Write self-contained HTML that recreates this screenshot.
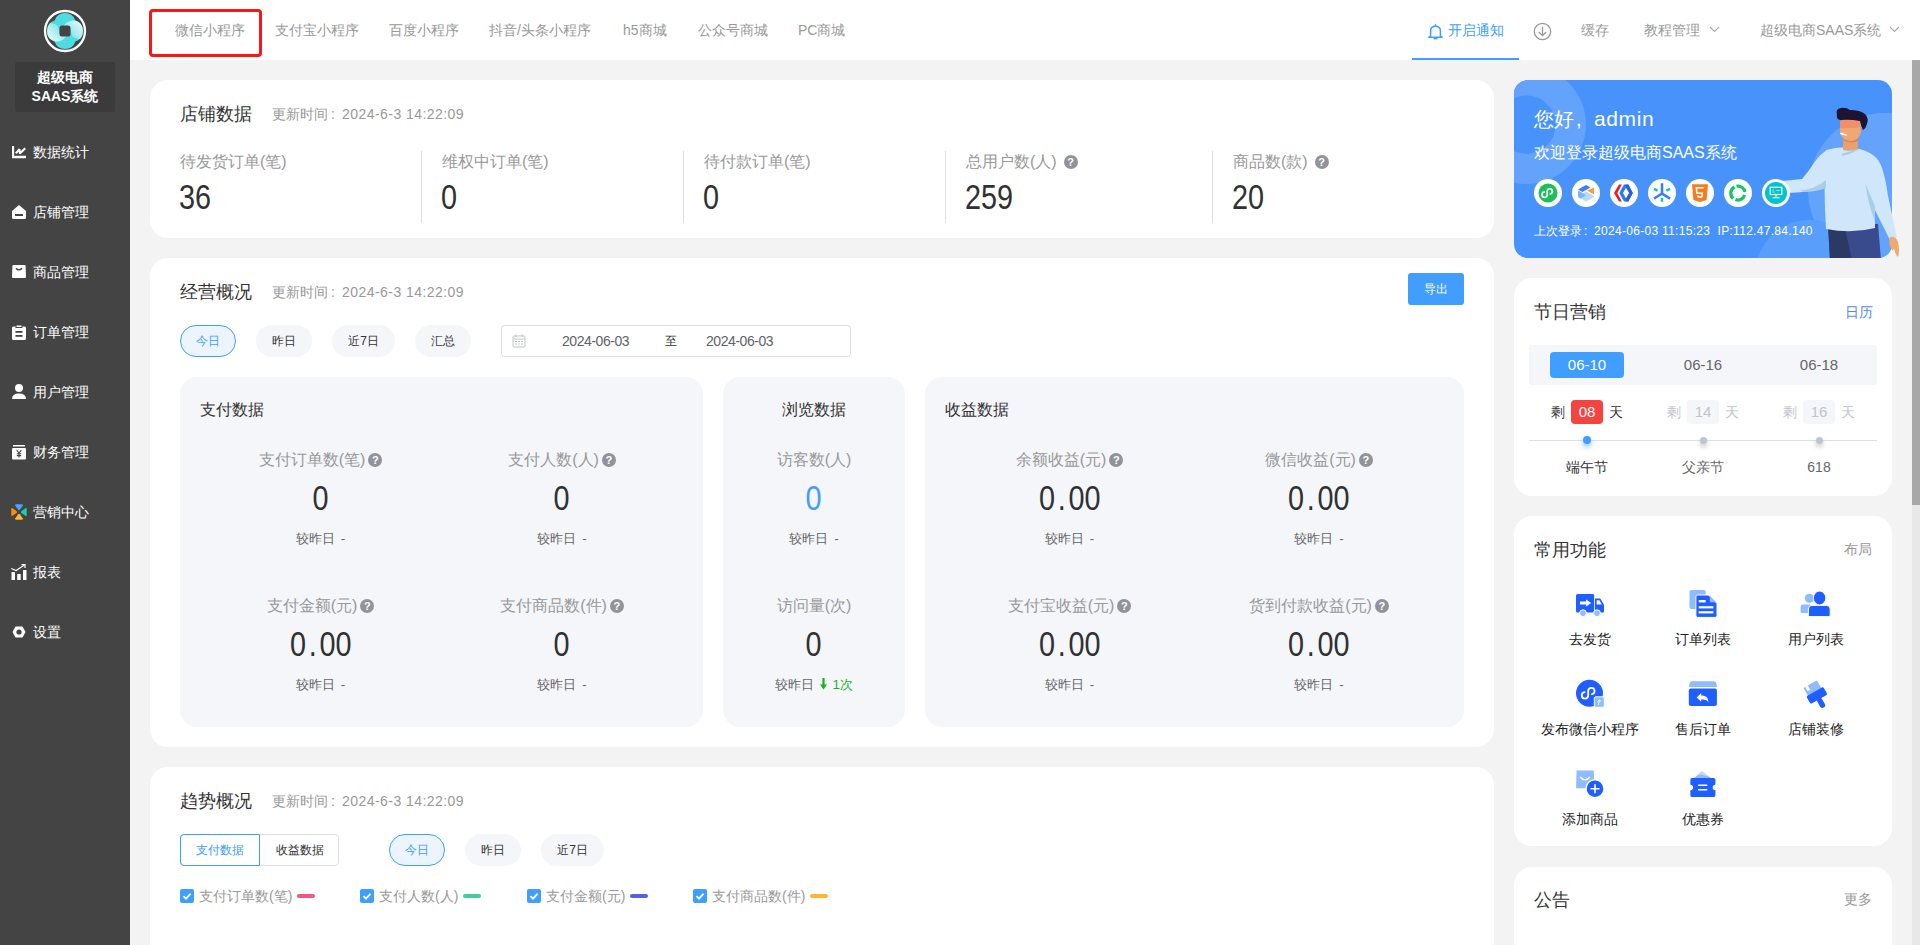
<!DOCTYPE html>
<html><head><meta charset="utf-8">
<style>
*{box-sizing:border-box;margin:0;padding:0}
html,body{width:1920px;height:945px;overflow:hidden}
body{position:relative;background:#f3f3f3;font-family:"Liberation Sans",sans-serif;color:#333}
.a{position:absolute;white-space:nowrap}
.side{position:absolute;left:0;top:0;width:130px;height:945px;background:#444}
.mi{position:absolute;left:0;width:130px;height:20px}
.mi .ic{position:absolute;left:12px;top:3px;width:14px;height:14px}
.mi .tx{position:absolute;left:33px;top:0;font-size:14px;line-height:20px;color:#fff}
.hdr{position:absolute;left:130px;top:0;width:1790px;height:60px;background:#fff}
.tab{position:absolute;top:20px;font-size:14px;line-height:20px;color:#999}
.card{position:absolute;background:#fff;border-radius:18px}
.ttl{position:absolute;font-size:18px;line-height:24px;color:#333}
.upd{position:absolute;font-size:14px;line-height:20px;color:#999}
.dt{letter-spacing:.45px}
.fc{display:inline-block;width:14px;padding-left:3px}
.lbl{font-size:16px;line-height:20px;color:#999}
.num{font-size:34.5px;line-height:40px;color:#303133;display:inline-block;transform:scaleX(.835);transform-origin:0 50%}
.q{display:inline-block;width:14px;height:14px;border-radius:50%;background:#909399;color:#fff;font-size:11px;line-height:14px;text-align:center;font-weight:bold;vertical-align:1px}
.pill{position:absolute;height:32px;border-radius:16px;background:#f5f6fa;font-size:12px;line-height:32px;text-align:center;color:#333}
.pill.on{background:#ecf5ff;border:1px solid #409eff;color:#409eff;line-height:30px}
.panel{position:absolute;background:#f5f6fa;border-radius:17px}
.ptl{position:absolute;font-size:16px;line-height:20px;color:#333}
.met{position:absolute;width:240px;text-align:center}
.met .l{position:absolute;left:0;right:0;top:0;font-size:16px;line-height:20px;color:#999;white-space:nowrap}
.met .n{position:absolute;left:0;right:0;top:28px;height:40px;white-space:nowrap}
.c2{transform-origin:50% 50%}
.dot{display:inline-block;width:16px;text-align:center}
.cb{display:inline-block;width:14px;height:14px;vertical-align:-2px;margin-right:5px}
.cb svg{display:block}
.lg{display:inline-block;width:18px;height:4px;border-radius:2px;vertical-align:3px;margin-left:5px}
.met .c{position:absolute;left:0;right:0;top:80px;font-size:13.4px;line-height:18px;word-spacing:2px;color:#666;white-space:nowrap}
</style></head>
<body>
<!-- SIDEBAR -->
<div class="side">
  <svg class="a" style="left:43px;top:9px" width="44" height="44" viewBox="0 0 44 44">
    <defs>
      <linearGradient id="lg1" x1="0" y1="1" x2="1" y2="0"><stop offset="0" stop-color="#fff" stop-opacity=".95"/><stop offset="1" stop-color="#fff" stop-opacity="0"/></linearGradient>
      <linearGradient id="lg2" x1="1" y1="0" x2="0" y2="1"><stop offset="0" stop-color="#fff" stop-opacity=".95"/><stop offset="1" stop-color="#fff" stop-opacity="0"/></linearGradient>
    </defs>
    <circle cx="22" cy="22" r="20" fill="none" stroke="#fff" stroke-width="2.3"/>
    <clipPath id="lc"><circle cx="22" cy="15" r="11"/><circle cx="22" cy="29" r="11"/><circle cx="15" cy="22" r="11"/><circle cx="29" cy="22" r="11"/></clipPath>
    <g clip-path="url(#lc)"><rect x="0" y="0" width="44" height="44" fill="#4fdbe2"/>
    <path d="M20 17.5Q24 11 32 11.5Q39 13 41 20V34Q38 30 33 29Q28 28 28 22Q28 17 20 17.5Z" fill="url(#lg2)"/>
    <path d="M24 26.5Q20 33 12 32.5Q5 31 3 24V10Q6 14 11 15Q16 16 16 22Q16 27 24 26.5Z" fill="url(#lg1)"/></g>
    <rect x="16.5" y="16.5" width="11" height="11" rx="2.5" fill="#444"/>
  </svg>
  <div class="a" style="left:15px;top:62px;width:100px;height:50px;background:#3b3b3b;border-radius:3px"></div>
  <div class="a" style="left:15px;top:68px;width:100px;text-align:center;color:#fff;font-weight:bold;font-size:14px;line-height:19px">超级电商<br>SAAS系统</div>

  <!-- menu -->
  <div class="mi" style="top:142px"><svg class="ic" viewBox="0 0 14 13" style="top:4px;height:13px"><path d="M1 0V11H14" fill="none" stroke="#fff" stroke-width="2.3"/><path d="M3.8 7.4L7.4 3.2L7.9 7.6L13.2 2.2" fill="none" stroke="#fff" stroke-width="2.1" stroke-linejoin="bevel"/></svg><div class="tx">数据统计</div></div>
  <div class="mi" style="top:202px"><svg class="ic" viewBox="0 0 14 14" style="top:3px"><path d="M0 6L7 0L14 6V12.5Q14 14 12.5 14H1.5Q0 14 0 12.5Z" fill="#fff"/><rect x="3" y="9" width="8" height="2" fill="#444"/></svg><div class="tx">店铺管理</div></div>
  <div class="mi" style="top:262px"><svg class="ic" viewBox="0 0 14 14" style="top:3px"><path d="M1.5 0H12.5Q13.5 0 13.6 1L14 12Q14 13 13 13H1Q0 13 0 12L0.4 1Q0.5 0 1.5 0Z" fill="#fff"/><path d="M4 3.2Q7 6.5 10 3.2" fill="none" stroke="#444" stroke-width="1.5"/></svg><div class="tx">商品管理</div></div>
  <div class="mi" style="top:322px"><svg class="ic" viewBox="0 0 14 14" style="top:3px;height:15px"><path d="M1.5 1H3.5V2.5H10.5V1H12.5Q14 1 14 2.5V13Q14 14.5 12.5 14.5H1.5Q0 14.5 0 13V2.5Q0 1 1.5 1Z" fill="#fff"/><rect x="4.5" y="0" width="5" height="1.5" fill="#fff"/><rect x="3.5" y="5.5" width="7" height="1.8" fill="#444"/><rect x="3.5" y="9.5" width="7" height="1.8" fill="#444"/></svg><div class="tx">订单管理</div></div>
  <div class="mi" style="top:382px"><svg class="ic" viewBox="0 0 14 15" style="top:2px;height:15px"><circle cx="7" cy="4" r="4" fill="#fff"/><path d="M0 15Q0 9.5 7 9.5Q14 9.5 14 15Z" fill="#fff"/></svg><div class="tx">用户管理</div></div>
  <div class="mi" style="top:442px"><svg class="ic" viewBox="0 0 14 15" style="top:3px;height:15px"><rect x="1" y="0" width="12" height="1.5" fill="#fff"/><rect x="0" y="3" width="14" height="11.5" rx="1" fill="#fff"/><path d="M4.6 5.2L7 8L9.4 5.2M7 8V12.5M4.8 8.8H9.2M4.8 10.6H9.2" fill="none" stroke="#444" stroke-width="1.1"/></svg><div class="tx">财务管理</div></div>
  <div class="mi" style="top:502px"><svg class="ic" viewBox="0 0 16 16" style="left:11px;top:2px;width:16px;height:16px"><path d="M5 0.3H11Q12.5 0.3 11.7 1.7L8.8 5.7Q8 6.6 7.2 5.7L4.3 1.7Q3.5 0.3 5 0.3Z" fill="#4ba3fb"/><path d="M0.3 5V11Q0.3 12.5 1.7 11.7L5.7 8.8Q6.6 8 5.7 7.2L1.7 4.3Q0.3 3.5 0.3 5Z" fill="#ff8c0a"/><path d="M15.7 5V11Q15.7 12.5 14.3 11.7L10.3 8.8Q9.4 8 10.3 7.2L14.3 4.3Q15.7 3.5 15.7 5Z" fill="#10d6a6"/><path d="M5 15.7H11Q12.5 15.7 11.7 14.3L8.8 10.3Q8 9.4 7.2 10.3L4.3 14.3Q3.5 15.7 5 15.7Z" fill="#ffb732"/></svg><div class="tx">营销中心</div></div>
  <div class="mi" style="top:562px"><svg class="ic" viewBox="0 0 16 16" style="left:11px;top:2px;width:16px;height:16px"><rect x="0.5" y="8" width="3.5" height="8" rx="0.6" fill="#fff"/><rect x="6.2" y="10" width="3.5" height="6" rx="0.6" fill="#fff"/><rect x="12" y="6" width="3.5" height="10" rx="0.6" fill="#fff"/><path d="M0.3 4.5L5 6.5L13.5 1" fill="none" stroke="#fff" stroke-width="1.2"/><path d="M10.5 0.6H14V4" fill="none" stroke="#fff" stroke-width="1.2"/></svg><div class="tx">报表</div></div>
  <div class="mi" style="top:622px"><svg class="ic" viewBox="0 0 14 12" style="left:12px;top:4px;width:14px;height:12px"><path d="M3.5 0.5H10.5L13.5 6L10.5 11.5H3.5L0.5 6Z" fill="#fff"/><circle cx="7" cy="6" r="2.6" fill="#444"/></svg><div class="tx">设置</div></div>
</div>
<!-- HEADER -->
<div class="hdr"></div>
<div class="a" style="left:149px;top:9px;width:113px;height:48px;border:3px solid #ff1414;border-radius:4px"></div>
<div class="tab" style="left:175px">微信小程序</div>
<div class="tab" style="left:275px">支付宝小程序</div>
<div class="tab" style="left:389px">百度小程序</div>
<div class="tab" style="left:489px">抖音/头条小程序</div>
<div class="tab" style="left:623px">h5商城</div>
<div class="tab" style="left:698px">公众号商城</div>
<div class="tab" style="left:798px">PC商城</div>
<div class="a" style="left:1412px;top:58px;width:107px;height:2px;background:#409eff"></div>
<svg class="a" style="left:1428px;top:23px" width="15" height="17" viewBox="0 0 15 17"><path d="M7.5 1.2V2.5M2.6 13V8Q2.6 3.2 7.5 3.2Q12.4 3.2 12.4 8V13L14 14.2H1L2.6 13Z" fill="none" stroke="#409eff" stroke-width="1.5" stroke-linejoin="round"/><path d="M5.5 15.6H9.5" stroke="#409eff" stroke-width="1.6"/></svg>
<div class="tab" style="left:1448px;color:#409eff">开启通知</div>
<svg class="a" style="left:1533px;top:22px" width="19" height="19" viewBox="0 0 19 19"><circle cx="9.5" cy="9.5" r="8.2" fill="none" stroke="#999" stroke-width="1.3"/><path d="M9.5 4.8V13.5M5.8 10L9.5 13.7L13.2 10" fill="none" stroke="#999" stroke-width="1.3"/></svg>
<div class="tab" style="left:1581px">缓存</div>
<div class="tab" style="left:1644px">教程管理</div>
<svg class="a" style="left:1709px;top:26px" width="11" height="7" viewBox="0 0 11 7"><path d="M1 1L5.5 5.5L10 1" fill="none" stroke="#aaa" stroke-width="1.1"/></svg>
<div class="tab" style="left:1760px">超级电商SAAS系统</div>
<svg class="a" style="left:1889px;top:26px" width="11" height="7" viewBox="0 0 11 7"><path d="M1 1L5.5 5.5L10 1" fill="none" stroke="#aaa" stroke-width="1.1"/></svg>
<div class="a" style="left:1912px;top:60px;width:8px;height:885px;background:#e8e8e8"></div>
<div class="a" style="left:1912px;top:60px;width:8px;height:445px;background:#a8a8a8"></div>


<!-- RIGHT: WELCOME -->
<div class="a" style="left:1514px;top:80px;width:378px;height:178px;border-radius:14px;overflow:hidden;background:#4893fb">
  <svg width="378" height="178" style="position:absolute;left:0;top:0">
    <circle cx="12.5" cy="44.6" r="59.4" fill="#64a3fb"/>
    <circle cx="12.5" cy="44.6" r="29.2" fill="#4893fb"/>
    <circle cx="371" cy="110" r="77" fill="#64a3fb"/>
    <circle cx="296" cy="195" r="55" fill="#5a9efb"/>
    <circle cx="371" cy="110" r="77" fill="none"/>
  </svg>
</div>
<svg class="a" style="left:1780px;top:100px;overflow:visible" width="130" height="165" viewBox="0 0 130 165">
  <defs><clipPath id="cc"><path d="M-300 -30H112V144Q112 158 98 158H-300Z"/></clipPath></defs>
  <g clip-path="url(#cc)">
    <!-- pants -->
    <path d="M48 124H98L101 160H50Z" fill="#394b8c"/>
    <path d="M48 124H64L72 160H50Z" fill="#2c3964"/>
  </g>
  <!-- torso -->
  <path d="M46 50Q60 46 74 48Q88 50 93 56L95 128Q72 134 46 129Q44 95 45 78Z" fill="#cfe6fb"/>
  <!-- right arm -->
  <path d="M82 51Q97 53 102 68Q106 80 108 96L117 138L110 140L86 92Z" fill="#cfe6fb"/>
  <path d="M85.5 84L95 106L94.5 120Q88 104 85.5 84Z" fill="#a6cfe8"/>
  <!-- left arm -->
  <path d="M47 50Q40 54 34 63Q28 72 22 79Q12 80 2 81L4 93Q22 93 32 90Q40 88 46 82Z" fill="#cfe6fb"/>
  <path d="M20 90Q34 90 46 80V88Q36 92 24 92Z" fill="#a6cfe8"/>
  <!-- collar -->
  <path d="M62 55Q70 53 78 49" fill="none" stroke="#a6cfe8" stroke-width="2"/>
  <!-- neck -->
  <path d="M63 38H78V49Q70 52 63 50Z" fill="#e8a06c"/>
  <path d="M63 40Q70 44 78 41V38H63Z" fill="#d68555"/>
  <!-- face -->
  <path d="M60 21Q68 17 80 19L81 32Q79 41 70 41Q62 40 60 33Z" fill="#f0a872"/>
  <path d="M60 21Q68 17 80 19L80.5 27Q70 29 60 28Z" fill="#f0906a"/>
  <path d="M61 33.5L66 35" stroke="#fff" stroke-width="1.6" stroke-linecap="round"/>
  <!-- hair -->
  <path d="M57 15Q55 9 61 8Q66 7 70 10Q80 10 85 14Q89 18 87 24Q86 28 83 30Q81 26 80 21Q70 19 60 20Q56 19 57 15Z" fill="#1e1432"/>
  <!-- hand -->
  <path d="M110 137Q116 136 118 142Q120 150 118 157Q115 154 114 148Q113 152 112 150Q108 145 110 137Z" fill="#eea96f"/>
</svg>
<div class="a" style="left:1534px;top:106px;font-size:20px;line-height:26px;color:#fff">您好<span style="display:inline-block;width:20px;padding-left:2px">,</span><span style="font-size:21px;letter-spacing:.6px">admin</span></div>
<div class="a" style="left:1534px;top:143px;font-size:16px;line-height:20px;color:#fff">欢迎登录超级电商SAAS系统</div>
<div class="a" style="left:1534px;top:223px;font-size:12px;line-height:16px;color:#fff">上次登录<span style="display:inline-block;width:12px;padding-left:2px">:</span><span style="letter-spacing:.3px">2024-06-03 11:15:23&nbsp;&nbsp;IP:112.47.84.140</span></div>
<svg class="a" style="left:1534px;top:179px" width="28" height="28" viewBox="0 0 28 28"><circle cx="14" cy="14" r="14" fill="#fff"/><circle cx="14" cy="14" r="9.5" fill="#1bc05a"/><path d="M10.3 13.2A2.6 2.6 0 1 0 13.2 16V12A2.6 2.6 0 1 1 16.3 14.9" fill="none" stroke="#fff" stroke-width="1.7" stroke-linecap="round"/></svg>
<svg class="a" style="left:1572px;top:179px" width="28" height="28" viewBox="0 0 28 28"><circle cx="14" cy="14" r="14" fill="#fff"/><path d="M6 10.5L14 6L18.5 8.5L10.5 13Z" fill="#3d80f6"/><path d="M15 11.5L22 8.5V15.5Z" fill="#fb9b3c"/><path d="M6 11.5L10.5 14L6 16.5Z" fill="#7fb2fb"/><path d="M6 17L14 12.5L22 17V18L14 22.5L8 19L6 18Z" fill="#b5dcff"/><path d="M6 12L6 18L8.5 19.4L14 16.3L10.2 14Z" fill="#7fb2fb"/></svg>
<svg class="a" style="left:1610px;top:179px" width="28" height="28" viewBox="0 0 28 28"><circle cx="14" cy="14" r="14" fill="#fff"/><path d="M11.8 5.6H9L4 14L9 22.4H11.8L7.3 14Z" fill="#ee1d24"/><path d="M9.3 14L14 5.6H18.2L22.8 14L18.2 22.4H14ZM13 14L16.1 19.6L19.2 14L16.1 8.4Z" fill="#1f7ef5" fill-rule="evenodd"/><path d="M16.1 5.6H18.2L22.8 14L18.2 22.4H16.1L16.1 19.6L19.2 14L16.1 8.4Z" fill="#2a5be0"/></svg>
<svg class="a" style="left:1648px;top:179px" width="28" height="28" viewBox="0 0 28 28"><circle cx="14" cy="14" r="14" fill="#fff"/><path d="M14 5.5V14.5M14 14.5L7 19M14 14.5L21 19" fill="none" stroke="#3c7cf5" stroke-width="2.6" stroke-linecap="square"/><path d="M6 9.8L9.6 11.6M22 9.8L18.4 11.6M14 19V22.8" fill="none" stroke="#11c1cf" stroke-width="2.6"/></svg>
<svg class="a" style="left:1686px;top:179px" width="28" height="28" viewBox="0 0 28 28"><circle cx="14" cy="14" r="14" fill="#fff"/><path d="M6 5.2H22L20.6 21L14 23L7.4 21Z" fill="#f87b1e"/><path d="M17.8 8.8H10.4L10.9 14.2H16.3L16 17.6L14 18.2L12 17.6L11.9 16.3" fill="none" stroke="#fff" stroke-width="1.6"/></svg>
<svg class="a" style="left:1724px;top:179px" width="28" height="28" viewBox="0 0 28 28"><circle cx="14" cy="14" r="14" fill="#fff"/><path d="M9.2 19.5A7 7 0 0 1 10.5 8" fill="none" stroke="#16c46b" stroke-width="3.2"/><path d="M12.5 7.2A7 7 0 0 1 20.9 13" fill="none" stroke="#16c46b" stroke-width="3.2"/><path d="M20.6 16A7 7 0 0 1 11.5 20.6" fill="none" stroke="#16c46b" stroke-width="3.2"/></svg>
<svg class="a" style="left:1762px;top:179px" width="28" height="28" viewBox="0 0 28 28"><circle cx="14" cy="14" r="14" fill="#fff"/><circle cx="14" cy="14" r="11" fill="#00c3cd"/><rect x="8.2" y="8.3" width="11.6" height="7.2" fill="none" stroke="#fff" stroke-width="1.2"/><path d="M14 15.5V18.5M10.5 18.8H17.5" stroke="#fff" stroke-width="1.1"/><path d="M10 11H12M10 13H13M14 11.5H18" stroke="#9feef2" stroke-width="0.8"/></svg>

<!-- RIGHT: HOLIDAY -->
<div class="card" style="left:1514px;top:278px;width:378px;height:218px"></div>
<div class="ttl" style="left:1534px;top:300px">节日营销</div>
<div class="a" style="left:1845px;top:302px;font-size:14px;line-height:20px;color:#5a8cf0">日历</div>
<div class="a" style="left:1529px;top:345px;width:348px;height:40px;background:#f5f6fa;border-radius:3px"></div>
<div class="a" style="left:1550px;top:352px;width:74px;height:26px;background:#409eff;border-radius:4px"></div>
<div class="a" style="left:1529px;top:355px;width:116px;text-align:center;font-size:15px;line-height:20px;color:#fff">06-10</div>
<div class="a" style="left:1645px;top:355px;width:116px;text-align:center;font-size:15px;line-height:20px;color:#666">06-16</div>
<div class="a" style="left:1761px;top:355px;width:116px;text-align:center;font-size:15px;line-height:20px;color:#666">06-18</div>
<div class="a" style="left:1529px;top:440px;width:348px;height:1px;background:#dcdfe6"></div>
<div class="a" style="left:1551px;top:402px;font-size:14px;line-height:20px;color:#333">剩</div><div class="a" style="left:1571px;top:400px;width:32px;height:24px;border-radius:4px;background:#f5433f;color:#fff;font-size:15px;line-height:24px;text-align:center">08</div><div class="a" style="left:1609px;top:402px;font-size:14px;line-height:20px;color:#333">天</div>
<div class="a" style="left:1583px;top:436px;width:8px;height:8px;border-radius:50%;background:#409eff;box-shadow:0 3px 5px rgba(64,158,255,.6)"></div>
<div class="a" style="left:1529px;top:457px;width:116px;text-align:center;font-size:14px;line-height:20px;color:#333">端午节</div>
<div class="a" style="left:1667px;top:402px;font-size:14px;line-height:20px;color:#c0c4cc">剩</div><div class="a" style="left:1687px;top:400px;width:32px;height:24px;border-radius:4px;background:#f5f6fa;color:#c0c4cc;font-size:15px;line-height:24px;text-align:center">14</div><div class="a" style="left:1725px;top:402px;font-size:14px;line-height:20px;color:#c0c4cc">天</div>
<div class="a" style="left:1700px;top:437px;width:7px;height:7px;border-radius:50%;background:#c0c4cc;box-shadow:0 3px 5px rgba(0,0,0,.22)"></div>
<div class="a" style="left:1645px;top:457px;width:116px;text-align:center;font-size:14px;line-height:20px;color:#666">父亲节</div>
<div class="a" style="left:1783px;top:402px;font-size:14px;line-height:20px;color:#c0c4cc">剩</div><div class="a" style="left:1803px;top:400px;width:32px;height:24px;border-radius:4px;background:#f5f6fa;color:#c0c4cc;font-size:15px;line-height:24px;text-align:center">16</div><div class="a" style="left:1841px;top:402px;font-size:14px;line-height:20px;color:#c0c4cc">天</div>
<div class="a" style="left:1816px;top:437px;width:7px;height:7px;border-radius:50%;background:#c0c4cc;box-shadow:0 3px 5px rgba(0,0,0,.22)"></div>
<div class="a" style="left:1761px;top:457px;width:116px;text-align:center;font-size:14px;line-height:20px;color:#666">618</div>

<!-- RIGHT: COMMON -->
<div class="card" style="left:1514px;top:516px;width:378px;height:330px"></div>
<div class="ttl" style="left:1534px;top:538px">常用功能</div>
<div class="a" style="left:1844px;top:541px;font-size:13.5px;line-height:18px;color:#999">布局</div>
<div class="a" style="left:1530px;top:629px;width:120px;text-align:center;font-size:14px;line-height:20px;color:#222">去发货</div>
<div class="a" style="left:1643px;top:629px;width:120px;text-align:center;font-size:14px;line-height:20px;color:#222">订单列表</div>
<div class="a" style="left:1756px;top:629px;width:120px;text-align:center;font-size:14px;line-height:20px;color:#222">用户列表</div>
<div class="a" style="left:1530px;top:719px;width:120px;text-align:center;font-size:14px;line-height:20px;color:#222">发布微信小程序</div>
<div class="a" style="left:1643px;top:719px;width:120px;text-align:center;font-size:14px;line-height:20px;color:#222">售后订单</div>
<div class="a" style="left:1756px;top:719px;width:120px;text-align:center;font-size:14px;line-height:20px;color:#222">店铺装修</div>
<div class="a" style="left:1530px;top:809px;width:120px;text-align:center;font-size:14px;line-height:20px;color:#222">添加商品</div>
<div class="a" style="left:1643px;top:809px;width:120px;text-align:center;font-size:14px;line-height:20px;color:#222">优惠券</div>
<svg class="a" style="left:1576px;top:590px;overflow:visible" width="28" height="28" viewBox="0 0 28 28"><rect x="0" y="4" width="18.2" height="18.4" rx="1.5" fill="#1f5fff"/><path d="M19 8.4H24.3L28 14.8V21.4Q28 22.4 27 22.4H19Z" fill="#1f5fff"/><path d="M20.6 10.2H23.4L25.8 14.4H20.6Z" fill="#fff"/><path d="M4 11.6H10V9.6L15.2 13L10 16.4V14.4H4Z" fill="#fff"/><circle cx="7" cy="23.2" r="3.4" fill="#8fbbff" stroke="#fff" stroke-width="1"/><circle cx="21" cy="23.2" r="3.4" fill="#8fbbff" stroke="#fff" stroke-width="1"/></svg>
<svg class="a" style="left:1689px;top:590px;overflow:visible" width="28" height="28" viewBox="0 0 28 28"><rect x="0.5" y="0" width="16.2" height="19" rx="2" fill="#8fbbff"/><path d="M8.5 5H19.5L28 13.5V25.5Q28 27.4 26 27.4H8.5Q6.9 27.4 6.9 25.5V6.6Q6.9 5 8.5 5Z" fill="#1f5fff" stroke="#fff" stroke-width="1"/><path d="M20.8 5.8L27.3 12.3H20.8Z" fill="#8fbbff"/><rect x="9.7" y="10" width="7" height="2.4" fill="#fff"/><rect x="9.7" y="16.2" width="14.7" height="2.2" fill="#fff"/><rect x="9.7" y="21.2" width="14.7" height="2.2" fill="#fff"/></svg>
<svg class="a" style="left:1801px;top:590px;overflow:visible" width="28" height="28" viewBox="0 0 28 28"><circle cx="8.4" cy="8.3" r="4.6" fill="#8fbbff"/><path d="M-0.4 17Q-0.4 14.6 2 14.6H9V23.1H1Q-0.4 23.1 -0.4 21.6Z" fill="#8fbbff"/><ellipse cx="18.6" cy="8" rx="6.2" ry="7" fill="#1f5fff" stroke="#fff" stroke-width="1"/><path d="M7.4 19Q7.4 15.4 11 15.4H25.6Q29.2 15.4 29.2 19V25.2Q29.2 26.6 27.8 26.6H8.8Q7.4 26.6 7.4 25.2Z" fill="#1f5fff" stroke="#fff" stroke-width="1"/></svg>
<svg class="a" style="left:1576px;top:680px;overflow:visible" width="28" height="28" viewBox="0 0 28 28"><circle cx="13.5" cy="13.3" r="13.5" fill="#1f5fff"/><path d="M8.6 12.2A3.2 3.2 0 1 0 12.2 15.6V10.6A3.2 3.2 0 1 1 16 14.2" fill="none" stroke="#fff" stroke-width="1.8" stroke-linecap="round"/><rect x="18.3" y="16.8" width="10" height="10.5" rx="1.5" fill="#8fbbff" stroke="#fff" stroke-width="1"/><path d="M22.2 25L23.6 20.4M21.6 21.5L23.6 19.8L25 21.8" fill="none" stroke="#fff" stroke-width="0.9"/></svg>
<svg class="a" style="left:1689px;top:680px;overflow:visible" width="28" height="28" viewBox="0 0 28 28"><path d="M3 1.3H24.8Q26.6 1.3 27.4 3.5L28 7H0L0.6 3.5Q1.3 1.3 3 1.3Z" fill="#8fbbff"/><rect x="-0.2" y="8.4" width="28.1" height="17.6" rx="2" fill="#1f5fff"/><path d="M7.6 17.4L12.2 13V15.4Q19.5 15 19.5 22.4Q17.5 18.6 12.2 19.6V21.8Z" fill="#fff"/></svg>
<svg class="a" style="left:1801px;top:680px;overflow:visible" width="28" height="28" viewBox="0 0 28 28"><g transform="translate(1.2 1.2) rotate(-30 14 14)"><path d="M6.5 1.5H21Q22 1.5 22 2.5V10H6.5Z" fill="#8fbbff"/><path d="M8.6 1.5V6.2H11.6V1.5Z" fill="#fff"/><rect x="4.8" y="10" width="19.4" height="9" rx="1.6" fill="#1f5fff"/><rect x="11.7" y="18" width="5.4" height="10.5" rx="2.6" fill="#1f5fff"/></g></svg>
<svg class="a" style="left:1576px;top:770px;overflow:visible" width="28" height="28" viewBox="0 0 28 28"><path d="M0.6 0.4H17.8L18.3 18.3H0Z" fill="#8fbbff"/><path d="M4.2 7Q9 12.6 13.8 7" fill="none" stroke="#fff" stroke-width="1.6"/><circle cx="19" cy="18.7" r="9" fill="#1f5fff" stroke="#fff" stroke-width="1.4"/><path d="M14.5 18.7H23.5M19 14.2V23.2" stroke="#fff" stroke-width="1.6"/></svg>
<svg class="a" style="left:1689px;top:770px;overflow:visible" width="28" height="28" viewBox="0 0 28 28"><path d="M5.5 8L11.6 1.5Q12.6 0.6 13.8 1.4L22 8Z" fill="#c3dbff"/><path d="M5.2 8Q8 4.8 12 4.6L19 6.2L21.8 8Z" fill="#8fbbff"/><path d="M3 7.9H24.8Q26.4 7.9 26.4 9.5V14.8A2.7 2.7 0 0 0 26.4 20.2V25.4Q26.4 27 24.8 27H3Q1.4 27 1.4 25.4V20.2A2.7 2.7 0 0 0 1.4 14.8V9.5Q1.4 7.9 3 7.9Z" fill="#1f5fff"/><rect x="8.9" y="14.4" width="9.6" height="1.6" rx=".8" fill="#fff"/><rect x="8.9" y="19" width="9.6" height="1.6" rx=".8" fill="#fff"/></svg>

<!-- RIGHT: NOTICE -->
<div class="card" style="left:1514px;top:867px;width:378px;height:200px"></div>
<div class="ttl" style="left:1534px;top:888px">公告</div>
<div class="a" style="left:1844px;top:891px;font-size:13.5px;line-height:18px;color:#999">更多</div>

<!-- CARD 1 -->
<div class="card" style="left:150px;top:80px;width:1344px;height:158px"></div>
<div class="ttl" style="left:180px;top:102px">店铺数据</div>
<div class="upd" style="left:272px;top:104px">更新时间<span class="fc">:</span><span class="dt">2024-6-3 14:22:09</span></div>
<div class="a" style="left:421px;top:151px;width:1px;height:72px;background:#dcdfe6"></div>
<div class="a" style="left:683px;top:151px;width:1px;height:72px;background:#dcdfe6"></div>
<div class="a" style="left:945px;top:151px;width:1px;height:72px;background:#dcdfe6"></div>
<div class="a" style="left:1212px;top:151px;width:1px;height:72px;background:#dcdfe6"></div>
<div class="a lbl" style="left:180px;top:152px">待发货订单(笔)</div>
<div class="a lbl" style="left:442px;top:152px">维权中订单(笔)</div>
<div class="a lbl" style="left:704px;top:152px">待付款订单(笔)</div>
<div class="a lbl" style="left:966px;top:152px">总用户数(人)<span class="q" style="margin-left:7px">?</span></div>
<div class="a lbl" style="left:1233px;top:152px">商品数(款)<span class="q" style="margin-left:7px">?</span></div>
<div class="a" style="left:179px;top:177px"><span class="num">36</span></div>
<div class="a" style="left:441px;top:177px"><span class="num">0</span></div>
<div class="a" style="left:703px;top:177px"><span class="num">0</span></div>
<div class="a" style="left:965px;top:177px"><span class="num">259</span></div>
<div class="a" style="left:1232px;top:177px"><span class="num">20</span></div>

<!-- CARD 2 -->
<div class="card" style="left:150px;top:258px;width:1344px;height:489px"></div>
<div class="ttl" style="left:180px;top:280px">经营概况</div>
<div class="upd" style="left:272px;top:282px">更新时间<span class="fc">:</span><span class="dt">2024-6-3 14:22:09</span></div>
<div class="a" style="left:1408px;top:273px;width:56px;height:32px;background:#419eff;border-radius:3px;color:#fff;font-size:12px;line-height:32px;text-align:center">导出</div>
<div class="pill on" style="left:180px;top:325px;width:56px">今日</div>
<div class="pill" style="left:256px;top:325px;width:56px">昨日</div>
<div class="pill" style="left:332px;top:325px;width:63px">近7日</div>
<div class="pill" style="left:415px;top:325px;width:56px">汇总</div>
<div class="a" style="left:501px;top:325px;width:350px;height:32px;border:1px solid #dcdfe6;border-radius:4px"></div>
<svg class="a" style="left:512px;top:334px" width="14" height="14" viewBox="0 0 14 14"><rect x="1" y="2" width="12" height="11" rx="1" fill="none" stroke="#c0c4cc" stroke-width="1"/><path d="M1 5H13M4 0.5V3M10 0.5V3" stroke="#c0c4cc" stroke-width="1"/><path d="M3 7.5H5M6 7.5H8M9 7.5H11M3 10H5M6 10H8M9 10H11" stroke="#c0c4cc" stroke-width="1"/></svg>
<div class="a" style="left:562px;top:332px;font-size:14px;letter-spacing:-.45px;line-height:18px;color:#606266">2024-06-03</div>
<div class="a" style="left:665px;top:332px;font-size:12px;line-height:18px;color:#303133">至</div>
<div class="a" style="left:706px;top:332px;font-size:14px;letter-spacing:-.45px;line-height:18px;color:#606266">2024-06-03</div>
<div class="panel" style="left:180px;top:377px;width:523px;height:350px"></div>
<div class="panel" style="left:723px;top:377px;width:182px;height:350px"></div>
<div class="panel" style="left:925px;top:377px;width:539px;height:350px"></div>
<div class="ptl" style="left:200px;top:400px">支付数据</div>
<div class="ptl" style="left:782px;top:400px">浏览数据</div>
<div class="ptl" style="left:945px;top:400px">收益数据</div>
<div class="met" style="left:200.5px;top:450px"><div class="l">支付订单数(笔)<span class="q" style="margin-left:3px">?</span></div><div class="n"><span class="num c2">0</span></div><div class="c">较昨日 -</div></div>
<div class="met" style="left:442px;top:450px"><div class="l">支付人数(人)<span class="q" style="margin-left:3px">?</span></div><div class="n"><span class="num c2">0</span></div><div class="c">较昨日 -</div></div>
<div class="met" style="left:200.5px;top:596px"><div class="l">支付金额(元)<span class="q" style="margin-left:3px">?</span></div><div class="n"><span class="num c2">0<span class="dot">.</span>00</span></div><div class="c">较昨日 -</div></div>
<div class="met" style="left:442px;top:596px"><div class="l">支付商品数(件)<span class="q" style="margin-left:3px">?</span></div><div class="n"><span class="num c2">0</span></div><div class="c">较昨日 -</div></div>
<div class="met" style="left:694px;top:450px"><div class="l">访客数(人)</div><div class="n"><span class="num c2" style="color:#409eff">0</span></div><div class="c">较昨日 -</div></div>
<div class="met" style="left:694px;top:596px"><div class="l">访问量(次)</div><div class="n"><span class="num c2">0</span></div><div class="c">较昨日 <svg width="7" height="12" viewBox="0 0 7 12" style="vertical-align:-1px"><path d="M3.5 0V8" stroke="#18b418" stroke-width="2.2"/><path d="M0 6.5H7L3.5 11.5Z" fill="#18b418"/></svg> <span style="color:#1bb31b">1次</span></div></div>
<div class="met" style="left:949.5px;top:450px"><div class="l">余额收益(元)<span class="q" style="margin-left:3px">?</span></div><div class="n"><span class="num c2">0<span class="dot">.</span>00</span></div><div class="c">较昨日 -</div></div>
<div class="met" style="left:1199px;top:450px"><div class="l">微信收益(元)<span class="q" style="margin-left:3px">?</span></div><div class="n"><span class="num c2">0<span class="dot">.</span>00</span></div><div class="c">较昨日 -</div></div>
<div class="met" style="left:949.5px;top:596px"><div class="l">支付宝收益(元)<span class="q" style="margin-left:3px">?</span></div><div class="n"><span class="num c2">0<span class="dot">.</span>00</span></div><div class="c">较昨日 -</div></div>
<div class="met" style="left:1199px;top:596px"><div class="l">货到付款收益(元)<span class="q" style="margin-left:3px">?</span></div><div class="n"><span class="num c2">0<span class="dot">.</span>00</span></div><div class="c">较昨日 -</div></div>

<!-- CARD 3 -->
<div class="card" style="left:150px;top:767px;width:1344px;height:400px"></div>
<div class="ttl" style="left:180px;top:789px">趋势概况</div>
<div class="upd" style="left:272px;top:791px">更新时间<span class="fc">:</span><span class="dt">2024-6-3 14:22:09</span></div>
<div class="a" style="left:180px;top:834px;width:159px;height:32px;border:1px solid #dcdfe6;border-radius:4px"></div>
<div class="a" style="left:180px;top:834px;width:80px;height:32px;border:1px solid #409eff;border-radius:4px 0 0 4px;color:#409eff;font-size:12px;line-height:30px;text-align:center">支付数据</div>
<div class="a" style="left:260px;top:834px;width:79px;height:32px;color:#333;font-size:12px;line-height:32px;text-align:center">收益数据</div>
<div class="pill on" style="left:389px;top:834px;width:56px">今日</div>
<div class="pill" style="left:465px;top:834px;width:56px">昨日</div>
<div class="pill" style="left:541px;top:834px;width:63px">近7日</div>
<div class="a" style="left:180px;top:886px;height:20px;font-size:14px;line-height:20px;color:#999"><span class="cb"><svg width="14" height="14" viewBox="0 0 14 14"><rect width="14" height="14" rx="2" fill="#409eff"/><path d="M3.5 7.2L6 9.6L10.6 4.6" fill="none" stroke="#fff" stroke-width="1.8"/></svg></span>支付订单数(笔)<span class="lg" style="background:#f5587b"></span></div>
<div class="a" style="left:360px;top:886px;height:20px;font-size:14px;line-height:20px;color:#999"><span class="cb"><svg width="14" height="14" viewBox="0 0 14 14"><rect width="14" height="14" rx="2" fill="#409eff"/><path d="M3.5 7.2L6 9.6L10.6 4.6" fill="none" stroke="#fff" stroke-width="1.8"/></svg></span>支付人数(人)<span class="lg" style="background:#3ccfa0"></span></div>
<div class="a" style="left:527px;top:886px;height:20px;font-size:14px;line-height:20px;color:#999"><span class="cb"><svg width="14" height="14" viewBox="0 0 14 14"><rect width="14" height="14" rx="2" fill="#409eff"/><path d="M3.5 7.2L6 9.6L10.6 4.6" fill="none" stroke="#fff" stroke-width="1.8"/></svg></span>支付金额(元)<span class="lg" style="background:#5062e0"></span></div>
<div class="a" style="left:693px;top:886px;height:20px;font-size:14px;line-height:20px;color:#999"><span class="cb"><svg width="14" height="14" viewBox="0 0 14 14"><rect width="14" height="14" rx="2" fill="#409eff"/><path d="M3.5 7.2L6 9.6L10.6 4.6" fill="none" stroke="#fff" stroke-width="1.8"/></svg></span>支付商品数(件)<span class="lg" style="background:#fdb632"></span></div>
</body></html>
